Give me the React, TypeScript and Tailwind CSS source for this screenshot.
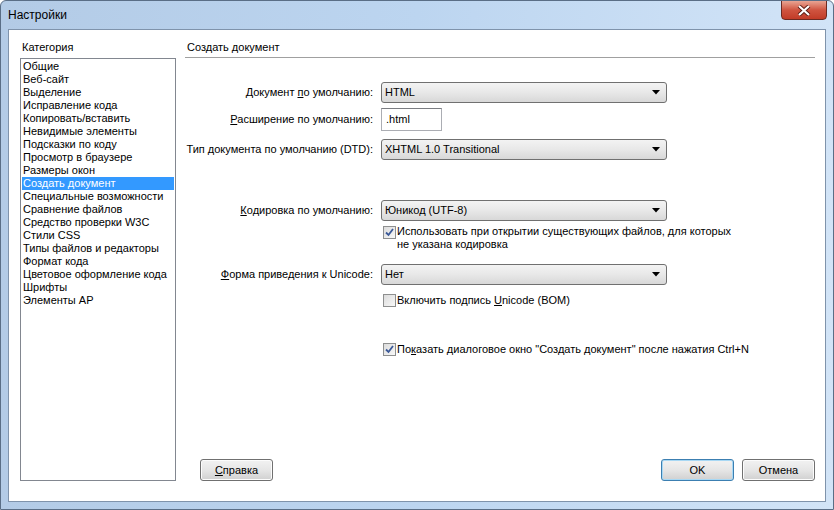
import React from 'react'

const categories = [
  'Общие',
  'Веб-сайт',
  'Выделение',
  'Исправление кода',
  'Копировать/вставить',
  'Невидимые элементы',
  'Подсказки по коду',
  'Просмотр в браузере',
  'Размеры окон',
  'Создать документ',
  'Специальные возможности',
  'Сравнение файлов',
  'Средство проверки W3C',
  'Стили CSS',
  'Типы файлов и редакторы',
  'Формат кода',
  'Цветовое оформление кода',
  'Шрифты',
  'Элементы AP',
]

function Select({ value }: { value: string }) {
  return (
    <div className="w-[286px] h-[21px] flex items-center rounded-[3px] border border-[#707070] bg-gradient-to-b from-[#f3f3f3] via-[#e8e8e8] to-[#d8d8d8] pl-[3px] pr-[6px]">
      <span className="flex-1">{value}</span>
      <svg width="8" height="5" viewBox="0 0 8 5">
        <path d="M0 0 L8 0 L4 4.5 Z" fill="#000" />
      </svg>
    </div>
  )
}

function Check({ checked }: { checked: boolean }) {
  return (
    <div className="w-[13px] h-[13px] shrink-0 border border-[#8e8f8f] bg-gradient-to-br from-[#dcdcdc] to-[#f8f8f8] flex items-center justify-center">
      {checked && (
        <svg width="9" height="9" viewBox="0 0 9 9">
          <path d="M1 4.5 L3.5 7 L8 1" stroke="#3b5998" strokeWidth="1.8" fill="none" />
        </svg>
      )}
    </div>
  )
}

function Button({ children, primary }: { children: React.ReactNode; primary?: boolean }) {
  return (
    <div
      className={`w-[73px] h-[22px] flex items-center justify-center rounded-[3px] border bg-gradient-to-b from-[#f2f2f2] via-[#e6e6e6] to-[#d0d0d0] ${
        primary ? 'border-[#3c7fb1] shadow-[inset_0_0_0_1px_#a8d8f4]' : 'border-[#707070] shadow-[inset_0_0_0_1px_#fcfcfc]'
      }`}
    >
      {children}
    </div>
  )
}

export default function App() {
  return (
    <div
      className="w-[834px] h-[510px] flex flex-col bg-gradient-to-r from-[#b3cbe6] via-[#bcd5f0] to-[#d2e4f7] border border-[#5a6e86] rounded-t-[6px] text-[11px] leading-[13px] text-black overflow-hidden"
      style={{ fontFamily: '"Liberation Sans", Arial, sans-serif' }}
    >
      {/* title bar */}
      <div className="h-[28px] flex items-start relative">
        <span className="ml-[7px] mt-[7px] text-[12px] leading-[14px]">Настройки</span>
        <div className="absolute right-[6px] top-[-1px] w-[46px] h-[20px] rounded-b-[4px] border border-[#6b2a22] bg-gradient-to-b from-[#e8a493] via-[#cf5440] to-[#c23b27] flex items-center justify-center">
          <svg width="14" height="11" viewBox="0 0 14 11">
            <path d="M2 1 L12 10 M12 1 L2 10" stroke="#5a1d14" strokeWidth="4" />
            <path d="M2 1 L12 10 M12 1 L2 10" stroke="#fff" strokeWidth="2.2" />
          </svg>
        </div>
      </div>

      {/* client area */}
      <div className="flex-1 mx-[7px] mb-[7px] bg-white border border-[#7f93ab] flex pt-[10px] pl-[11px] pr-[10px] pb-[20px]">
        {/* categories */}
        <div className="w-[156px] flex flex-col">
          <div className="h-[18px] pl-[2px] pt-[1px]">Категория</div>
          <div className="flex-1 border border-[#828790] pt-[1px] px-[1px]">
            {categories.map((c) => (
              <div
                key={c}
                className={`h-[13px] pl-[1px] ${c === 'Создать документ' ? 'bg-[#3399ff] text-white' : ''}`}
              >
                {c}
              </div>
            ))}
          </div>
        </div>

        {/* right pane */}
        <div className="flex-1 ml-[9px] flex flex-col">
          <div className="h-[18px] border-b border-[#a0a0a0] pl-[2px] pt-[1px]">Создать документ</div>

          <div className="mt-[24px] flex items-center">
            <div className="w-[188px] text-right">
              Документ <u>п</u>о умолчанию:
            </div>
            <div className="ml-[8px]">
              <Select value="HTML" />
            </div>
          </div>

          <div className="mt-[5px] flex items-center">
            <div className="w-[188px] text-right">
              <u>Р</u>асширение по умолчанию:
            </div>
            <div className="ml-[8px] w-[61px] h-[23px] border border-[#abadb3] border-t-[#7b7d82] flex items-center pl-[4px]">
              .html
            </div>
          </div>

          <div className="mt-[8px] flex items-center">
            <div className="w-[188px] text-right">Тип документа по умолчанию (DTD):</div>
            <div className="ml-[8px]">
              <Select value="XHTML 1.0 Transitional" />
            </div>
          </div>

          <div className="mt-[40px] flex items-center">
            <div className="w-[188px] text-right">
              <u>К</u>одировка по умолчанию:
            </div>
            <div className="ml-[8px]">
              <Select value="Юникод (UTF-8)" />
            </div>
          </div>

          <div className="mt-[4px] ml-[198px] flex items-start gap-[1px]">
            <div className="mt-[1px]">
              <Check checked />
            </div>
            <div>
              Использовать при открытии существующих файлов, для которых
              <br />
              не указана кодировка
            </div>
          </div>

          <div className="mt-[13px] flex items-center">
            <div className="w-[188px] text-right">
              <u>Ф</u>орма приведения к Unicode:
            </div>
            <div className="ml-[8px]">
              <Select value="Нет" />
            </div>
          </div>

          <div className="mt-[9px] ml-[198px] flex items-center gap-[1px]">
            <Check checked={false} />
            <div>
              Включить подпись <u>U</u>nicode (BOM)
            </div>
          </div>

          <div className="mt-[36px] ml-[198px] flex items-center gap-[1px]">
            <Check checked />
            <div>
              По<u>к</u>азать диалоговое окно "Создать документ" после нажатия Ctrl+N
            </div>
          </div>

          <div className="mt-auto flex items-center">
            <div className="ml-[15px]">
              <Button>
                <span>
                  <u>С</u>правка
                </span>
              </Button>
            </div>
            <div className="ml-auto flex gap-[8px]">
              <Button primary>OK</Button>
              <Button>Отмена</Button>
            </div>
          </div>
        </div>
      </div>
    </div>
  )
}
